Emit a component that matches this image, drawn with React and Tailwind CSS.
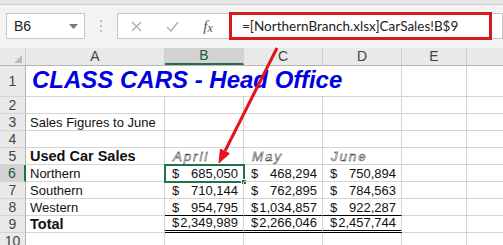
import React from "react";

const grid = "border-r border-b border-[#d4d4d4]";

const RowHead = ({ n, active }) => (
  <div
    className={`w-[26px] shrink-0 h-full flex items-center justify-center text-[14px] border-b border-[#d4d4d4] ${
      active
        ? "bg-[#d3d3d3] border-r-2 border-r-[#217346] text-[#1d5c3a]"
        : "bg-[#e9e9e9] border-r border-r-[#b4b4b4] text-[#444]"
    }`}
  >
    {n}
  </div>
);

const Money = ({ v }) => (
  <div className="flex justify-between w-full pl-[7px] pr-[5px]">
    <span>$</span>
    <span>{v}</span>
  </div>
);

const Empty = ({ w, extra = "" }) => <div className={`${w} shrink-0 h-full ${grid} ${extra}`} />;

const rows = [
  { n: 6, label: "Northern", vals: ["685,050", "468,294", "750,894"] },
  { n: 7, label: "Southern", vals: ["710,144", "762,895", "784,563"] },
  { n: 8, label: "Western", vals: ["954,795", "1,034,857", "922,287"] },
];

export default function App() {
  return (
    <div className="relative w-[503px] h-[245px] overflow-hidden bg-white font-['Liberation_Sans',Arial,sans-serif] text-[#111]">
      {/* ribbon edge */}
      <div className="h-[5px] bg-[#e6e6e6] border-b border-[#d2d2d2]" />

      {/* formula bar */}
      <div className="h-[43px] bg-[#f3f3f3] flex items-start pt-[8px] pl-[6px]">
        <div className="w-[79px] h-[26px] shrink-0 bg-white border border-[#c6c6c6] flex items-center justify-between pl-[7px] pr-[6px] text-[14px] text-[#222]">
          <span>B6</span>
          <svg width="9" height="5" viewBox="0 0 9 5">
            <path d="M0 0h9L4.5 5z" fill="#7a7a7a" />
          </svg>
        </div>
        <div className="w-[32px] shrink-0 h-[26px] flex flex-col items-center justify-center gap-[3px]">
          <span className="w-[2px] h-[2px] bg-[#bdbdbd]" />
          <span className="w-[2px] h-[2px] bg-[#bdbdbd]" />
          <span className="w-[2px] h-[2px] bg-[#bdbdbd]" />
        </div>
        <div className="flex-1 h-[26px] bg-white border border-[#c6c6c6] flex items-center">
          <div className="w-[36px] shrink-0 flex justify-center">
            <svg width="11" height="11" viewBox="0 0 11 11">
              <path d="M1 1l9 9M10 1l-9 9" stroke="#ababab" strokeWidth="1.3" />
            </svg>
          </div>
          <div className="w-[36px] shrink-0 flex justify-center">
            <svg width="13" height="11" viewBox="0 0 13 11">
              <path d="M1 6l4 4 7-9" stroke="#ababab" strokeWidth="1.3" fill="none" />
            </svg>
          </div>
          <div className="w-[36px] shrink-0 flex justify-center font-['Liberation_Serif',serif] italic text-[15px] text-[#555] leading-none">
            f<span className="text-[12px] mt-[3px]">x</span>
          </div>
          <div className="ml-[3px] w-[263px] h-[28px] shrink-0 border-[3px] border-[#d71920] flex items-center pl-[10px] font-['Lato',sans-serif] text-[13.5px] text-[#222]">
            =[NorthernBranch.xlsx]CarSales!B$9
          </div>
        </div>
      </div>

      {/* column headers */}
      <div className="h-[18px] flex text-[14px] text-[#444] bg-[#e9e9e9] border-b border-[#b4b4b4]">
        <div className="w-[26px] shrink-0 relative border-r border-[#cfcfcf]">
          <svg className="absolute right-[3px] bottom-[2px]" width="8" height="8" viewBox="0 0 8 8">
            <path d="M8 0v8H0z" fill="#b9b9b9" />
          </svg>
        </div>
        <div className="w-[139px] shrink-0 flex items-center justify-center border-r border-[#cfcfcf]">A</div>
        <div className="w-[79px] shrink-0 flex items-center justify-center bg-[#d3d3d3] border-b-2 border-[#217346] text-[#1d5c3a] border-r border-r-[#cfcfcf]">
          B
        </div>
        <div className="w-[79px] shrink-0 flex items-center justify-center border-r border-[#cfcfcf]">C</div>
        <div className="w-[79px] shrink-0 flex items-center justify-center border-r border-[#cfcfcf]">D</div>
        <div className="w-[65px] shrink-0 flex items-center justify-center border-r border-[#cfcfcf]">E</div>
        <div className="w-[80px] shrink-0 flex items-center justify-center">F</div>
      </div>

      {/* sheet */}
      <div className="text-[13px] leading-[15px]">
        <div className="h-[31px] flex">
          <RowHead n={1} />
          <div className={`w-[376px] shrink-0 h-full ${grid} flex items-end pl-[6px] pb-[2px]`}>
            <span className="font-bold italic text-[24px] leading-[28px] text-[#0000e0]">CLASS CARS - Head Office</span>
          </div>
          <Empty w="w-[65px]" />
          <Empty w="w-[80px]" />
        </div>

        <div className="h-[17px] flex">
          <RowHead n={2} />
          <Empty w="w-[139px]" />
          <Empty w="w-[79px]" />
          <Empty w="w-[79px]" />
          <Empty w="w-[79px]" />
          <Empty w="w-[65px]" />
          <Empty w="w-[80px]" />
        </div>

        <div className="h-[17px] flex">
          <RowHead n={3} />
          <div className={`w-[139px] shrink-0 h-full ${grid} flex items-end pl-[4px]`}>Sales Figures to June</div>
          <Empty w="w-[79px]" />
          <Empty w="w-[79px]" />
          <Empty w="w-[79px]" />
          <Empty w="w-[65px]" />
          <Empty w="w-[80px]" />
        </div>

        <div className="h-[17px] flex">
          <RowHead n={4} />
          <Empty w="w-[139px]" />
          <Empty w="w-[79px]" />
          <Empty w="w-[79px]" />
          <Empty w="w-[79px]" />
          <Empty w="w-[65px]" />
          <Empty w="w-[80px]" />
        </div>

        <div className="h-[17px] flex">
          <RowHead n={5} />
          <div className={`w-[139px] shrink-0 h-full ${grid} flex items-end pl-[4px] font-bold text-[14.5px]`}>Used Car Sales</div>
          {["April", "May", "June"].map((m) => (
            <div key={m} className={`w-[79px] shrink-0 h-full ${grid} flex items-end pl-[8px]`}>
              <span className="italic text-[13.5px] tracking-[1.8px] text-white [-webkit-text-stroke:0.4px_#000]">{m}</span>
            </div>
          ))}
          <Empty w="w-[65px]" />
          <Empty w="w-[80px]" />
        </div>

        {rows.map((r) => (
          <div key={r.n} className="h-[17px] flex">
            <RowHead n={r.n} active={r.n === 6} />
            <div className={`w-[139px] shrink-0 h-full ${grid} flex items-end pl-[4px]`}>{r.label}</div>
            {r.vals.map((v, i) => (
              <div
                key={i}
                className={`relative w-[79px] shrink-0 h-full border-r border-b border-[#d4d4d4] flex items-end ${
                  r.n === 8 ? "border-b-black" : ""
                }`}
              >
                <Money v={v} />
                {r.n === 6 && i === 0 && (
                  <span className="absolute -left-px -top-px w-[81px] h-[19px] border-2 border-[#217346]">
                    <span className="absolute -right-[4px] -bottom-[4px] w-[6px] h-[6px] bg-[#217346] border border-white" />
                  </span>
                )}
              </div>
            ))}
            <Empty w="w-[65px]" />
            <Empty w="w-[80px]" />
          </div>
        ))}

        <div className="h-[17px] flex">
          <RowHead n={9} />
          <div className={`w-[139px] shrink-0 h-full ${grid} flex items-end pl-[4px] font-bold text-[14.5px]`}>Total</div>
          {["2,349,989", "2,266,046", "2,457,744"].map((v) => (
            <div key={v} className="w-[79px] shrink-0 h-full border-r border-[#d4d4d4] border-b-[3px] border-double border-b-black flex items-end">
              <Money v={v} />
            </div>
          ))}
          <Empty w="w-[65px]" />
          <Empty w="w-[80px]" />
        </div>

        <div className="h-[17px] flex">
          <RowHead n={10} />
          <Empty w="w-[139px]" />
          <Empty w="w-[79px]" />
          <Empty w="w-[79px]" />
          <Empty w="w-[79px]" />
          <Empty w="w-[65px]" />
          <Empty w="w-[80px]" />
        </div>
      </div>

      {/* annotation arrow */}
      <svg className="absolute inset-0 pointer-events-none" width="503" height="245" viewBox="0 0 503 245">
        <line x1="277" y1="48" x2="225" y2="151" stroke="#e3141b" strokeWidth="3" />
        <polygon points="219,163 229.4,153.6 220.4,149.2" fill="#e3141b" stroke="#e3141b" strokeWidth="1" />
      </svg>
    </div>
  );
}
